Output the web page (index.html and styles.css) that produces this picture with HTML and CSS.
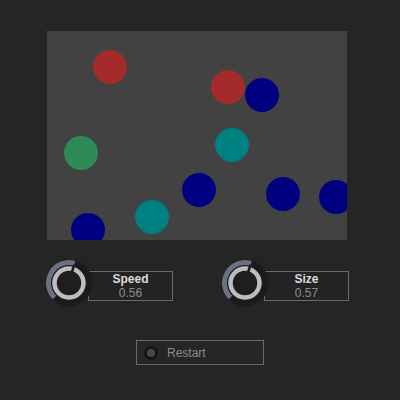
FILE: index.html
```html
<!DOCTYPE html>
<html>
<head>
<meta charset="utf-8">
<link rel="stylesheet" href="styles.css">
</head>
<body>
<div class="app">
  <div class="canvas">
    <div class="ball red" style="left:46px;top:19px"></div>
    <div class="ball red" style="left:164px;top:39px"></div>
    <div class="ball blue" style="left:198px;top:47px"></div>
    <div class="ball green" style="left:17px;top:105px"></div>
    <div class="ball teal" style="left:168px;top:97px"></div>
    <div class="ball blue" style="left:135px;top:142px"></div>
    <div class="ball blue" style="left:219px;top:146px"></div>
    <div class="ball blue" style="left:272px;top:149px"></div>
    <div class="ball teal" style="left:88px;top:169px"></div>
    <div class="ball blue" style="left:24px;top:182px"></div>
  </div>
  <div class="controls">
    <div class="control">
      <svg class="knob" viewBox="0 0 48 48" width="48" height="48">
        <circle cx="24" cy="24" r="23.5" fill="#1b1b1b"/>
        <path d="M9.5 38.5 A20.5 20.5 0 0 1 29.65 4.29" fill="none" stroke="#6a7282" stroke-width="5"/>
        <circle cx="24" cy="24" r="14.5" fill="#1e1e1e" stroke="#bdbdbd" stroke-width="4.5"/>
        <line x1="26.9" y1="13.4" x2="29.2" y2="5.6" stroke="#1b1b1b" stroke-width="2.6"/>
      </svg>
      <div class="label">
        <div class="name">Speed</div>
        <div class="value">0.56</div>
      </div>
    </div>
    <div class="control">
      <svg class="knob" viewBox="0 0 48 48" width="48" height="48">
        <circle cx="24" cy="24" r="23.5" fill="#1b1b1b"/>
        <path d="M9.5 38.5 A20.5 20.5 0 0 1 30.1 4.42" fill="none" stroke="#6a7282" stroke-width="5"/>
        <circle cx="24" cy="24" r="14.5" fill="#1e1e1e" stroke="#bdbdbd" stroke-width="4.5"/>
        <line x1="27.1" y1="13.5" x2="29.5" y2="5.7" stroke="#1b1b1b" stroke-width="2.6"/>
      </svg>
      <div class="label">
        <div class="name">Size</div>
        <div class="value">0.57</div>
      </div>
    </div>
  </div>
  <div class="button-row">
    <button class="restart"><span class="led"></span><span class="btn-text">Restart</span></button>
  </div>
</div>
</body>
</html>
```
FILE: styles.css
```css
html, body {
  margin: 0;
  padding: 0;
  background: #252525;
  width: 400px;
  height: 400px;
  overflow: hidden;
  font-family: "Liberation Sans", Arial, sans-serif;
}
.app {
  padding-top: 31px;
  padding-left: 47px;
}
.canvas {
  position: relative;
  width: 300px;
  height: 209px;
  background: #424242;
  overflow: hidden;
}
.ball {
  position: absolute;
  width: 34px;
  height: 34px;
  border-radius: 50%;
}
.red { background: #a52a2a; }
.blue { background: #000080; }
.green { background: #2e8b57; }
.teal { background: #008080; }
.controls {
  display: flex;
  gap: 48px;
  margin-top: 19px;
  margin-left: -2px;
}
.control {
  display: flex;
  align-items: flex-start;
}
.knob {
  display: block;
  position: relative;
  z-index: 1;
  margin-right: -5px;
}
.label {
  margin-top: 12px;
  width: 83px;
  height: 28px;
  border: 1px solid #6a6a6a;
  background: #232323;
  display: flex;
  flex-direction: column;
  align-items: center;
  justify-content: center;
}
.name {
  color: #dcdcdc;
  font-weight: 700;
  font-size: 12px;
  line-height: 14px;
}
.value {
  color: #8e8e8e;
  font-size: 12px;
  line-height: 14px;
}
.button-row {
  margin-top: 33px;
  margin-left: 89px;
}
.restart {
  display: flex;
  align-items: center;
  width: 128px;
  height: 25px;
  padding: 0 0 0 7px;
  border: 1px solid #6a6a6a;
  background: #262626;
  font-family: "Liberation Sans", Arial, sans-serif;
  font-size: 12px;
  color: #8a8a8a;
}
.led {
  width: 8px;
  height: 8px;
  border-radius: 50%;
  background: #484848;
  border: 3px solid #151515;
}
.btn-text {
  margin-left: 9px;
}
```
